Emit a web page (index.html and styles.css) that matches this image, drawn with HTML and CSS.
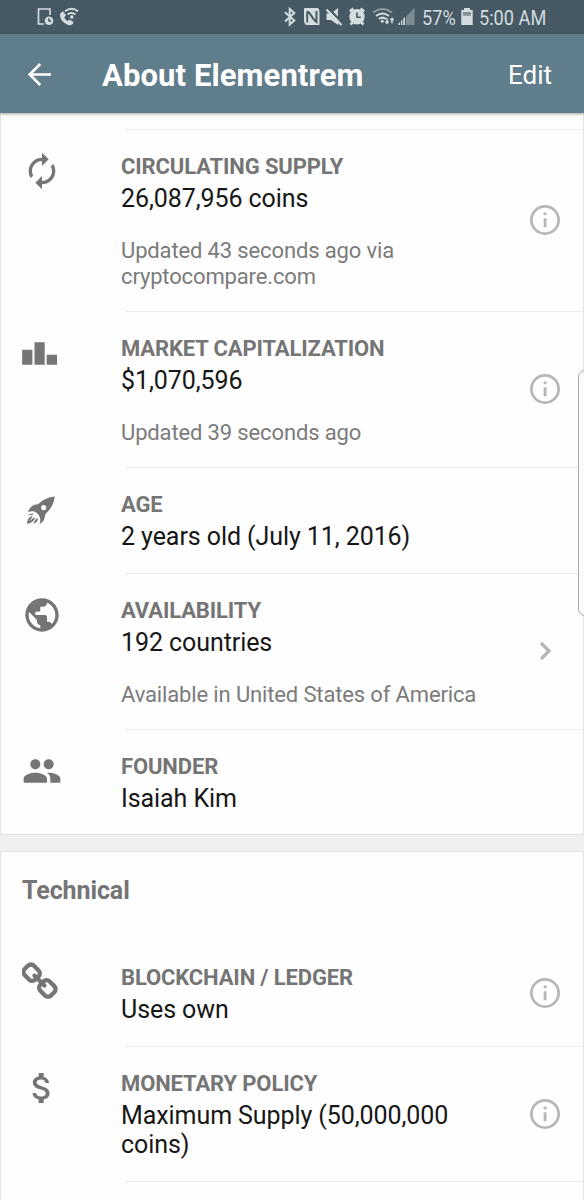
FILE: index.html
```html
<!DOCTYPE html>
<html lang="en">
<head>
<meta charset="utf-8">
<title>About Elementrem</title>
<link rel="stylesheet" href="styles.css">
</head>
<body>
<svg width="0" height="0" class="defs"><defs>
<symbol id="info" viewBox="0 0 24 24"><circle cx="12" cy="12" r="9.1" fill="none" stroke="currentColor" stroke-width="1.8"/><path d="M11.1 7h1.9v1.8h-1.9zM11.1 10.8h1.9v6.1h-1.9z"/></symbol>
</defs></svg>
<header class="statusbar">
<svg class="status-icons" width="60" height="34" viewBox="30 0 60 34">
<path d="M44 24h-5.500V9H50v6" fill="none" stroke="currentColor" stroke-width="1.700"/>
<circle cx="49" cy="20.700" r="4.300"/><path d="M49 18.200v2.800h2.200" class="cut"/>
<path d="M60.300 13.200l2.700-2 3 4-1.900 2.200q1.400 2.300 3.600 3.600l2-1.400 4 2.700q-.8 2.700-3.200 2.900C64.500 25.200 58.700 18.500 60.300 13.200z"/>
<path d="M65 11.300q6.500-5.200 13 0M67.500 14.500q4-3.200 8 0" fill="none" stroke="currentColor" stroke-width="1.900"/><circle cx="71.800" cy="17" r="1.700"/>
</svg>
<svg class="status-icons status-right" width="136" height="34" viewBox="280 0 136 34">
<path d="M285 12.200l9.300 8.400-4.600 4V9l4.600 4-9.300 8.400" fill="none" stroke="currentColor" stroke-width="2"/>
<path d="M304.500 8h13.500q1.500 1.500 1.500 4v13H306q-2-1.500-2-4V9.500q0-1.500.5-1.500z"/><path d="M307.200 22.500V11.500M307.200 11.500q2.500 1 4.300 4.500t5 6V11" class="cut nfc"/>
<path d="M326.500 13.500h4.500l7-5.500v17l-7-5h-4.500z"/><path d="M328 8l15.500 16" fill="none" stroke="#465964" stroke-width="2.500"/><path d="M326.500 9.500L341.500 25" fill="none" stroke="currentColor" stroke-width="2.200"/>
<circle cx="357" cy="16.800" r="7.700"/><path d="M349.800 11.500l3.500-3M364.200 11.500l-3.500-3M352.500 22.500l-2 2M361.500 22.500l2 2" fill="none" stroke="currentColor" stroke-width="2.500"/><path d="M357 12.500v4.800h3.800" class="cut"/>
<g fill="none" stroke="currentColor" stroke-width="2"><path d="M373 12.500q9.500-7 19 0" opacity=".5"/><path d="M376 16q6.500-5 13 0M379 19q3.500-2.800 7 0"/></g><circle cx="382.300" cy="21.200" r="1.500"/>
<path d="M387 18v5M385.300 21.400l1.700 2 1.700-2M392 23.500v-5M390.300 20.300l1.700-2 1.700 2" fill="none" stroke="currentColor" stroke-width="1.400"/>
<path d="M414.500 8v17H406V16.500z" opacity=".38"/><path d="M398.500 25v-1.500l1.500-1.500v3zM401 25v-4l1.300-1.300V25zM403.300 25v-6.300l1.700-1.700v8z"/>
</svg>
<span class="status-text battery-text">57%</span>
<svg class="status-icons battery" width="14" height="34" viewBox="460 0 14 34"><path d="M464 8h6v2h2.700v15h-11.400V10h2.700z"/><path d="M463 12h8v3.700h-8z" fill="#7f8e95"/></svg>
<span class="status-text clock">5:00 AM</span>
</header>
<nav class="appbar">
<svg class="back" width="26" height="26" viewBox="0 0 26 26"><path d="M24 12.500H3M13.200 2L2.700 12.500 13.200 23" fill="none" stroke="currentColor" stroke-width="2.600"/></svg>
<h1 class="title">About Elementrem</h1>
<span class="edit">Edit</span>
</nav>
<main>
<section class="card card-top">
<article class="row">
<svg class="icon" viewBox="0 0 24 24"><path d="M12 6v3l4-4-4-4v3c-4.420 0-8 3.580-8 8 0 1.570.46 3.030 1.240 4.260L6.700 14.800c-.45-.83-.7-1.790-.7-2.800 0-3.310 2.690-6 6-6zm6.760 1.740L17.300 9.200c.44.84.7 1.790.7 2.800 0 3.310-2.690 6-6 6v-3l-4 4 4 4v-3c4.420 0 8-3.580 8-8 0-1.570-.46-3.030-1.240-4.260z"/></svg>
<div class="body"><h2 class="label">CIRCULATING SUPPLY</h2><p class="value">26,087,956 coins</p><p class="note">Updated 43 seconds ago via<br>cryptocompare.com</p></div>
<svg class="info"><use href="#info"/></svg>
</article>
<article class="row">
<svg class="icon" viewBox="0 0 40 40"><path d="M.2 16.700h10.200v15H.2zM12.500 9.200h10.200v22.500H12.500zM24.700 21.700H35v10H24.700z"/></svg>
<div class="body"><h2 class="label">MARKET CAPITALIZATION</h2><p class="value">$1,070,596</p><p class="note">Updated 39 seconds ago</p></div>
<svg class="info"><use href="#info"/></svg>
</article>
<article class="row">
<svg class="icon" viewBox="0 0 40 40"><path fill-rule="evenodd" d="M32.800 7.500Q22.500 8.500 16 15.200q-4 .3-6 1.800-2.500 2-4 6 3.500-1.300 6.500-.5 4.500 2 5.500 6.500.8 3-.5 6 4.200-2 5.200-6.500L23.500 25Q31.500 18 32.800 7.500zM21.700 16a2.600 2.600 0 1 1 0 5.200 2.600 2.600 0 0 1 0-5.200z"/><path d="M5.300 27.200q2-3.200 6.200-2.700l-1.300 1.700q-2.400-.6-4.900 1zM5.200 34.800q-.5-4.800 4-7.600l1.600.4-3.800 4.900 5.300-4.200.7 1.300q-2.800 4.800-7.800 5.200zM11.200 34.700l1.800-3.200 1.200-1.700 1.500-.6q.8 3.800-4.500 5.500z"/></svg>
<div class="body"><h2 class="label">AGE</h2><p class="value">2 years old (July 11, 2016)</p></div>
</article>
<article class="row">
<svg class="icon" viewBox="0 0 24 24"><path d="M12 2C6.480 2 2 6.480 2 12s4.480 10 10 10 10-4.480 10-10S17.520 2 12 2zm-1 17.930c-3.950-.49-7-3.850-7-7.930 0-.62.08-1.210.21-1.790L9 15v1c0 1.100.9 2 2 2v1.930zm6.900-2.540c-.26-.81-1-1.390-1.900-1.390h-1v-3c0-.55-.45-1-1-1H8v-2h2c.55 0 1-.45 1-1V7h2c1.100 0 2-.9 2-2v-.41c2.930 1.190 5 4.060 5 7.410 0 2.080-.8 3.970-2.100 5.390z"/></svg>
<div class="body"><h2 class="label">AVAILABILITY</h2><p class="value">192 countries</p><p class="note">Available in United States of America</p></div>
<svg class="info" viewBox="0 0 36 36"><path d="M14 10l8 8-8 8" fill="none" stroke="currentColor" stroke-width="3.200"/></svg>
</article>
<article class="row">
<svg class="icon" viewBox="0 0 24 24"><path d="M16 11c1.660 0 2.990-1.340 2.990-3S17.660 5 16 5s-3 1.340-3 3 1.340 3 3 3zm-8 0c1.660 0 2.990-1.340 2.990-3S9.660 5 8 5 5 6.340 5 8s1.340 3 3 3zm0 2c-2.330 0-7 1.170-7 3.500V19h14v-2.500c0-2.330-4.670-3.500-7-3.500zm8 0c-.29 0-.62.02-.97.05 1.160.84 1.970 1.970 1.970 3.450V19h6v-2.500c0-2.330-4.670-3.500-7-3.500z"/></svg>
<div class="body"><h2 class="label">FOUNDER</h2><p class="value">Isaiah Kim</p></div>
</article>
</section>
<section class="card card-bottom">
<h2 class="section-title">Technical</h2>
<article class="row first">
<svg class="icon" viewBox="50 0 1792 1792"><path d="M1456 1216q0-40-28-68l-208-208q-28-28-68-28-42 0-72 32 3 3 19 18.500t21.500 21.500 15 19 13 25.500 3.500 27.500q0 40-28 68t-68 28q-15 0-27.500-3.500t-25.500-13-19-15-21.500-21.500-18.500-19q-33 31-33 73 0 40 28 68l206 207q27 27 68 27 40 0 68-26l147-146q28-28 28-67zm-703-705q0-40-28-68l-206-207q-28-28-68-28-39 0-68 27l-147 146q-28 28-28 67 0 40 28 68l208 208q27 27 68 27 42 0 72-31-3-3-19-18.500t-21.500-21.500-15-19-13-25.500-3.500-27.500q0-40 28-68t68-28q15 0 27.500 3.500t25.500 13 19 15 21.500 21.500 18.500 19q33-31 33-73zm895 705q0 120-85 203l-147 146q-83 83-203 83-121 0-204-85l-206-207q-83-83-83-203 0-123 88-209l-88-88q-86 88-208 88-120 0-204-84l-208-208q-84-84-84-204t85-203l147-146q83-83 203-83 121 0 204 85l206 207q83 83 83 203 0 123-88 209l88 88q86-88 208-88 120 0 204 84l208 208q84 84 84 204z"/></svg>
<div class="body"><h2 class="label">BLOCKCHAIN / LEDGER</h2><p class="value">Uses own</p></div>
<svg class="info"><use href="#info"/></svg>
</article>
<article class="row">
<svg class="icon" viewBox="0 0 24 24"><path d="M11.800 10.900c-2.270-.59-3-1.200-3-2.150 0-1.090 1.010-1.850 2.700-1.850 1.780 0 2.440.85 2.500 2.100h2.210c-.07-1.720-1.120-3.300-3.210-3.810V3h-3v2.160c-1.940.42-3.500 1.680-3.500 3.610 0 2.310 1.910 3.460 4.700 4.130 2.500.6 3 1.480 3 2.410 0 .69-.49 1.790-2.700 1.790-2.060 0-2.870-.92-2.980-2.100h-2.200c.12 2.190 1.760 3.420 3.680 3.830V21h3v-2.150c1.950-.37 3.500-1.500 3.500-3.550 0-2.840-2.430-3.810-4.700-4.400z"/></svg>
<div class="body"><h2 class="label">MONETARY POLICY</h2><p class="value">Maximum Supply (50,000,000<br>coins)</p></div>
<svg class="info"><use href="#info"/></svg>
</article>
<div class="row"></div>
</section>
</main>
<div class="edge-handle"></div>
</body>
</html>
```
FILE: styles.css
```css
* { box-sizing: border-box; margin: 0; padding: 0; }
body { width: 584px; height: 1200px; overflow: hidden; position: relative; display: flex; flex-direction: column; background: #f0f0f0; font-family: Roboto, sans-serif; color: #171717; }
svg { display: block; flex: none; fill: currentColor; }
.defs { position: absolute; }
.statusbar { flex: none; height: 34px; display: flex; align-items: center; padding-left: 30px; background: #465964; color: #d3dcdf; }
.cut { fill: none; stroke: #465964; stroke-width: 1.6; }
.nfc { stroke-width: 1.9; }
.status-right { margin-left: 190px; }
.status-text { font-size: 21px; line-height: 34px; white-space: nowrap; transform-origin: left center; transform: scaleX(.865); padding-top: 1px; }
.battery-text { width: 39px; margin-left: 6px; }
.battery { margin-left: -1px; }
.clock { margin-left: 5px; }
.appbar { flex: none; height: 79px; display: flex; align-items: center; padding: 2px 32px 0 27px; background: #607d8b; color: #fff; box-shadow: 0 1px 3px rgba(0,0,0,.35); z-index: 1; }
.title { font-size: 31px; line-height: 40px; font-weight: 700; letter-spacing: .1px; margin-left: 49px; padding-top: 2px; white-space: nowrap; }
.edit { margin-left: auto; font-size: 26px; }
main { flex: none; }
.card { background: #fefefe; border: 1px solid #e2e2e2; }
.card-top { border-top: 0; padding-top: 16px; height: 722px; }
.card-bottom { margin-top: 16px; height: 360px; }
.row { position: relative; display: flex; align-items: center; padding-left: 20.5px; padding-right: 20.5px; }
.row::before { content: ""; position: absolute; left: 124px; right: 0; top: 0; height: 1px; background: #ebebeb; }
.first::before { display: none; }
.icon { width: 40px; height: 40px; align-self: flex-start; margin-top: 22px; color: #757575; }
.body { flex: 1; margin-left: 59.5px; padding: 25px 0 22px; }
.label { font-size: 22px; line-height: 26px; font-weight: 700; letter-spacing: -.13px; color: #757575; white-space: nowrap; }
.value { font-size: 25px; line-height: 29px; letter-spacing: -.08px; margin-top: 4px; white-space: nowrap; }
.note { font-size: 22px; line-height: 26px; letter-spacing: -.14px; margin-top: 25px; margin-bottom: -1px; color: #7b7b7b; white-space: nowrap; }
.info { width: 36px; height: 36px; color: #b6b6b6; }
.section-title { font-size: 25px; line-height: 30px; letter-spacing: -.1px; color: #757575; padding: 24px 0 34px 21px; }
.edge-handle { position: absolute; left: 578px; top: 370px; width: 14px; height: 246px; border: 1px solid #a9a9a9; border-radius: 8px; background: #fafafa; }
```
